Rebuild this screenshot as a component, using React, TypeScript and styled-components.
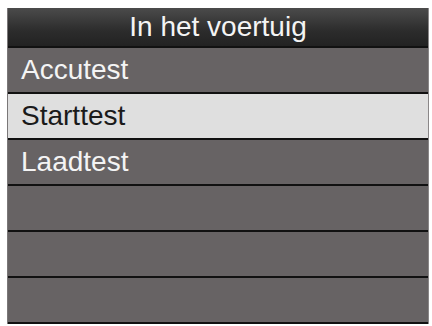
import styled, { createGlobalStyle } from "styled-components";

const GlobalStyle = createGlobalStyle`
  body {
    margin: 0;
    background: #ffffff;
    font-family: "Liberation Sans", Arial, sans-serif;
  }
`;

const Screen = styled.div`
  width: 420px;
  margin: 8px 0 0 7px;
  display: flex;
  flex-direction: column;
  border-right: 1px solid #8a8788;
  border-left: 1px solid #7a7778;
`;

const Header = styled.div`
  height: 38px;
  display: flex;
  align-items: center;
  justify-content: center;
  background: linear-gradient(#4b4b4b, #2c2c2c 60%, #222222);
  border-bottom: 2px solid #111111;
  color: #f4f4f4;
  font-size: 28px;
`;

const Row = styled.div<{ $selected?: boolean }>`
  height: 44px;
  display: flex;
  align-items: center;
  padding-left: 13px;
  background: ${(p) => (p.$selected ? "#dfdfdf" : "#676364")};
  color: ${(p) => (p.$selected ? "#1a1a1a" : "#f4f4f4")};
  border-bottom: 2px solid #111111;
  font-size: 28px;
`;

const items = ["Accutest", "Starttest", "Laadtest", "", "", ""];

const App = (): JSX.Element => {
  return (
    <>
      <GlobalStyle />
      <Screen>
        <Header>In het voertuig</Header>
        {items.map((label, i) => (
          <Row key={i} $selected={i === 1}>
            {label}
          </Row>
        ))}
      </Screen>
    </>
  );
};

export default App;
